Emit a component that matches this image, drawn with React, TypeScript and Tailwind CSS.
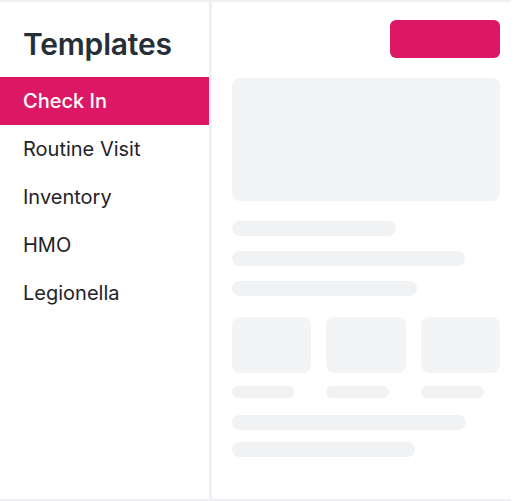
const items = ["Check In", "Routine Visit", "Inventory", "HMO", "Legionella"];

function Bar({ className }: { className: string }) {
  return <div className={`h-[15px] rounded-full bg-[#f1f2f4] ${className}`} />;
}

export default function App() {
  return (
    <div className="h-[501px] w-[520px] bg-white font-['Inter',sans-serif]">
      <div className="flex h-[501px] w-[511px] border-y-2 border-[#eef0f3]">
        {/* Sidebar */}
        <aside className="w-[212px] shrink-0 border-r-[3px] border-[#eef0f3]">
          <h1 className="px-[23px] pt-[22px] pb-[13px] text-[30px] font-semibold leading-[40px] tracking-[-0.2px] text-[#262f38]">
            Templates
          </h1>
          <nav className="flex flex-col">
            {items.map((item, i) => (
              <div
                key={item}
                className={`flex h-[48px] items-center px-[23px] text-[20px] ${
                  i === 0 ? "bg-[#dc1866] font-medium text-white" : "text-[#1f2329]"
                }`}
              >
                {item}
              </div>
            ))}
          </nav>
        </aside>

        {/* Skeleton content */}
        <main className="flex flex-1 flex-col pl-[20px] pr-[11px] pt-[18px]">
          <div className="flex justify-end">
            <div className="h-[38px] w-[110px] rounded-[6px] bg-[#dc1866]" />
          </div>
          <div className="mt-[20px] h-[123px] w-[268px] rounded-[8px] bg-[#f3f4f6]" />
          <div className="mt-[20px] flex flex-col gap-[15px]">
            <Bar className="w-[164px]" />
            <Bar className="w-[233px]" />
            <Bar className="w-[185px]" />
          </div>
          <div className="mt-[21px] grid w-[268px] grid-cols-3 gap-x-[15px] gap-y-[13px]">
            {[0, 1, 2].map((n) => (
              <div key={n} className="h-[56px] rounded-[8px] bg-[#f3f4f6]" />
            ))}
            {[0, 1, 2].map((n) => (
              <div key={n} className="h-[12px] w-[63px] rounded-full bg-[#f1f2f4]" />
            ))}
          </div>
          <div className="mt-[17px] flex flex-col gap-[12px]">
            <Bar className="w-[234px]" />
            <Bar className="w-[183px]" />
          </div>
        </main>
      </div>
    </div>
  );
}
